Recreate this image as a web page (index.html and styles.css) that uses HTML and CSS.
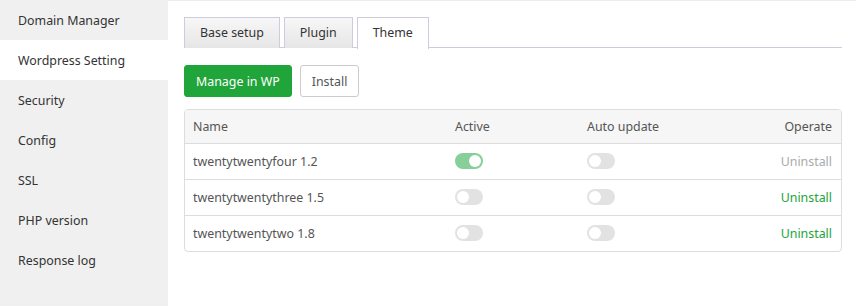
FILE: index.html
```html
<!DOCTYPE html>
<html lang="en">

<head>
    <meta charset="UTF-8">
    <title>Site settings</title>
    <link rel="stylesheet" href="styles.css">
</head>

<body>
    <div class="layout">
        <nav class="sidebar">
            <div class="nav-item">Domain Manager</div>
            <div class="nav-item active">Wordpress Setting</div>
            <div class="nav-item">Security</div>
            <div class="nav-item">Config</div>
            <div class="nav-item">SSL</div>
            <div class="nav-item">PHP version</div>
            <div class="nav-item">Response log</div>
        </nav>

        <main class="content">
            <div class="tabs">
                <div class="tab">Base setup</div>
                <div class="tab">Plugin</div>
                <div class="tab active">Theme</div>
            </div>

            <div class="actions">
                <button class="btn btn-green">Manage in WP</button>
                <button class="btn">Install</button>
            </div>

            <div class="table-box">
                <table>
                    <thead>
                        <tr>
                            <th class="col-name">Name</th>
                            <th class="col-active">Active</th>
                            <th>Auto update</th>
                            <th class="right">Operate</th>
                        </tr>
                    </thead>
                    <tbody>
                        <tr>
                            <td>twentytwentyfour 1.2</td>
                            <td><span class="switch on"></span></td>
                            <td><span class="switch"></span></td>
                            <td class="right"><a class="link disabled">Uninstall</a></td>
                        </tr>
                        <tr>
                            <td>twentytwentythree 1.5</td>
                            <td><span class="switch"></span></td>
                            <td><span class="switch"></span></td>
                            <td class="right"><a class="link">Uninstall</a></td>
                        </tr>
                        <tr>
                            <td>twentytwentytwo 1.8</td>
                            <td><span class="switch"></span></td>
                            <td><span class="switch"></span></td>
                            <td class="right"><a class="link">Uninstall</a></td>
                        </tr>
                    </tbody>
                </table>
            </div>
        </main>
    </div>
</body>

</html>
```

FILE: styles.css
```css
* {
    box-sizing: border-box;
    margin: 0;
    padding: 0;
}

body {
    font-family: "Noto Sans", "Open Sans", Arial, sans-serif;
    font-size: 12.4px;
    color: #555;
    background-color: #fff;
}

.layout {
    display: flex;
    height: 306px;
}

.sidebar {
    width: 168px;
    background-color: #f0f0f0;
    flex-shrink: 0;
}

.nav-item {
    height: 40px;
    line-height: 40px;
    padding: 1px 0 0 18px;
    color: #333;
}

.nav-item.active {
    background-color: #fff;
}

.content {
    flex-grow: 1;
    padding: 17px 14px 0 16px;
    border-top: 1px solid #ececec;
}

.tabs {
    display: flex;
    gap: 4px;
    border-bottom: 1px solid #cfcbdc;
    height: 31px;
    margin-top: -1px;
}

.tab {
    height: 31px;
    line-height: 29px;
    padding: 0 15px;
    border: 1px solid #cfcbdc;
    border-bottom: none;
    background: linear-gradient(#f7f7f7, #e6e6e6);
    color: #333;
}

.tab.active {
    background: #fff;
    height: 32px;
}

.actions {
    display: flex;
    gap: 8px;
    margin-top: 17px;
}

.btn {
    height: 32px;
    padding: 0 11px;
    border: 1px solid #ccc;
    border-radius: 3px;
    background-color: #fff;
    color: #555;
    font-family: inherit;
    font-size: 12.4px;
}

.btn-green {
    background-color: #20a53a;
    border-color: #20a53a;
    color: #fff;
}

.table-box {
    margin-top: 12px;
    border: 1px solid #ddd;
    border-radius: 4px;
    overflow: hidden;
}

table {
    width: 100%;
    border-collapse: collapse;
}

th {
    background-color: #f6f6f6;
    font-weight: normal;
    text-align: left;
    height: 33px;
    padding: 0 9px 0 8px;
    color: #555;
}

td {
    height: 36px;
    padding: 0 9px 0 8px;
    border-top: 1px solid #ddd;
    vertical-align: middle;
}

.col-name {
    width: 262px;
}

.col-active {
    width: 132px;
}

.right {
    text-align: right;
}

.switch {
    display: block;
    position: relative;
    width: 28px;
    height: 16px;
    border-radius: 8px;
    background-color: #e2e2e2;
}

.switch::after {
    content: "";
    position: absolute;
    top: 2px;
    left: 2px;
    width: 12px;
    height: 12px;
    border-radius: 50%;
    background-color: #fff;
}

.switch.on {
    background-color: #86cf98;
}

.switch.on::after {
    left: 14px;
}

.link {
    color: #20a53a;
}

.link.disabled {
    color: #aaa;
}
```
